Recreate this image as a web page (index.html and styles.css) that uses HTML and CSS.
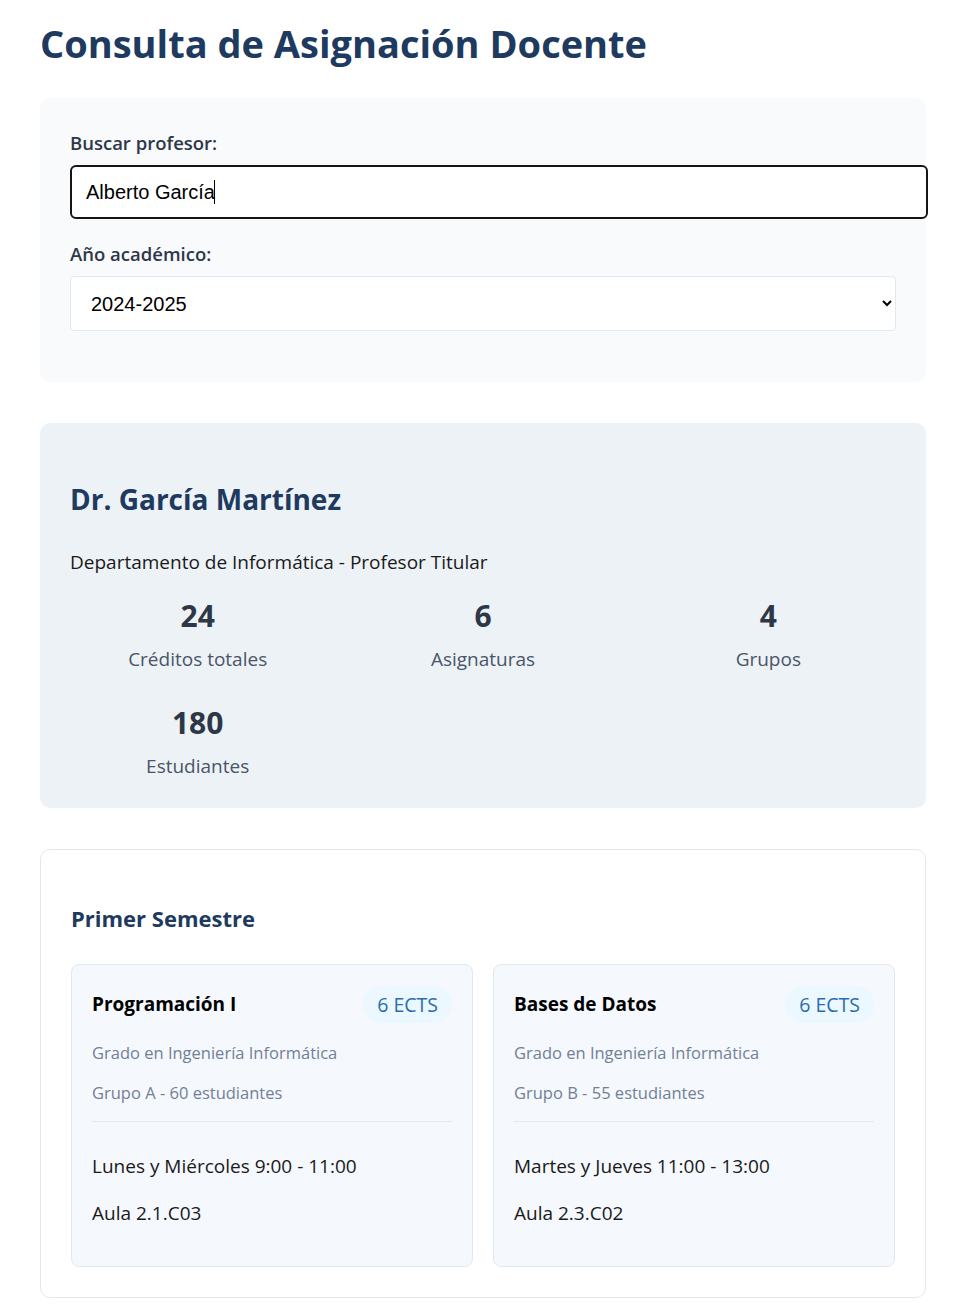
FILE: index.html
```html
<!DOCTYPE html>
<html lang="es">
<head>
<meta charset="utf-8">
<title>Consulta de Asignación Docente</title>
<link rel="stylesheet" href="styles.css">
</head>
<body>
<main class="page">
  <h1 class="title">Consulta de Asignación Docente</h1>

  <section class="search-panel">
    <div class="field">
      <label class="field-label" for="prof">Buscar profesor:</label>
      <div class="input-wrap">
        <input id="prof" class="text-input" type="text" value="Alberto García">
        <span class="caret"></span>
      </div>
    </div>
    <div class="field">
      <label class="field-label" for="year">Año académico:</label>
      <select id="year" class="select-input">
        <option>2024-2025</option>
        <option>2023-2024</option>
      </select>
    </div>
  </section>

  <section class="prof-panel">
    <h2 class="prof-name">Dr. García Martínez</h2>
    <p class="prof-dept">Departamento de Informática - Profesor Titular</p>
    <div class="stats">
      <div class="stat"><div class="stat-num">24</div><div class="stat-label">Créditos totales</div></div>
      <div class="stat"><div class="stat-num">6</div><div class="stat-label">Asignaturas</div></div>
      <div class="stat"><div class="stat-num">4</div><div class="stat-label">Grupos</div></div>
      <div class="stat"><div class="stat-num">180</div><div class="stat-label">Estudiantes</div></div>
    </div>
  </section>

  <section class="semester">
    <h3 class="semester-title">Primer Semestre</h3>
    <div class="courses">
      <article class="course">
        <div class="course-head">
          <h4 class="course-name">Programación I</h4>
          <span class="badge">6 ECTS</span>
        </div>
        <p class="course-meta">Grado en Ingeniería Informática</p>
        <p class="course-meta">Grupo A - 60 estudiantes</p>
        <div class="course-sched">
          <p class="sched-line">Lunes y Miércoles 9:00 - 11:00</p>
          <p class="sched-line">Aula 2.1.C03</p>
        </div>
      </article>
      <article class="course">
        <div class="course-head">
          <h4 class="course-name">Bases de Datos</h4>
          <span class="badge">6 ECTS</span>
        </div>
        <p class="course-meta">Grado en Ingeniería Informática</p>
        <p class="course-meta">Grupo B - 55 estudiantes</p>
        <div class="course-sched">
          <p class="sched-line">Martes y Jueves 11:00 - 13:00</p>
          <p class="sched-line">Aula 2.3.C02</p>
        </div>
      </article>
    </div>
  </section>
</main>
</body>
</html>
```

FILE: styles.css
```css
* { box-sizing: border-box; }

html, body {
  margin: 0;
  padding: 0;
  background: #ffffff;
}

body {
  font-family: "Open Sans", "Noto Sans", sans-serif;
  font-size: 19px;
  color: #1a1a1a;
}

.page {
  padding: 0 40px 20px;
}

.title {
  margin: 0;
  padding-top: 18px;
  font-size: 38px;
  line-height: 50px;
  font-weight: 700;
  color: #1e3a5f;
  margin-bottom: 30px;
}

/* search panel */
.search-panel {
  background: #f8fafc;
  border-radius: 10px;
  padding: 31px 30px 30px;
}

.field { margin-bottom: 21px; }

.field-label {
  display: block;
  font-size: 18.5px;
  line-height: 27px;
  font-weight: 600;
  color: #2d3748;
  margin-bottom: 9px;
}

.input-wrap { position: relative; }

.text-input {
  box-sizing: content-box;
  width: 100%;
  padding: 15px 14px;
  height: 20px;
  border: 2px solid #151515;
  border-radius: 6px;
  font-family: "Liberation Sans", Arial, sans-serif;
  font-size: 20px;
  color: #000;
  background: #fff;
  outline: none;
}

.caret {
  position: absolute;
  left: 144px;
  top: 15px;
  width: 1px;
  height: 24px;
  background: #000;
}

.select-input {
  display: block;
  width: 100%;
  height: 55px;
  padding: 0 12px 0 16px;
  border: 1px solid #e2e8f0;
  border-radius: 4px;
  background: #fff;
  font-family: "Liberation Sans", Arial, sans-serif;
  font-size: 20px;
  color: #000;
}

/* professor panel */
.prof-panel {
  margin-top: 41px;
  background: #edf2f7;
  border-radius: 10px;
  padding: 30px 30px 28px;
}

.prof-name {
  margin: 27px 0 0;
  font-size: 28px;
  line-height: 39px;
  font-weight: 700;
  color: #1e3a5f;
}

.prof-dept {
  margin: 30px 0 0;
  font-size: 19px;
  line-height: 27px;
  color: #1a1a1a;
}

.stats {
  margin-top: 22px;
  display: grid;
  grid-template-columns: repeat(3, 1fr);
  column-gap: 30px;
  row-gap: 32px;
  text-align: center;
}

.stat-num {
  font-size: 30px;
  line-height: 36px;
  font-weight: 700;
  color: #2d3748;
}

.stat-label {
  margin-top: 12px;
  font-size: 19px;
  line-height: 27px;
  color: #4a5568;
}

/* semester */
.semester {
  margin-top: 41px;
  border: 1px solid #e2e8f0;
  border-radius: 10px;
  padding: 30px;
  background: #fff;
}

.semester-title {
  margin: 24px 0 0;
  font-size: 22px;
  line-height: 28px;
  font-weight: 700;
  color: #1e3a5f;
}

.courses {
  margin-top: 32px;
  display: grid;
  grid-template-columns: 1fr 1fr;
  gap: 20px;
}

.course {
  background: #f5f8fc;
  border: 1px solid #e2e8f0;
  border-radius: 8px;
  padding: 21px 20px 38px;
}

.course-head {
  display: flex;
  align-items: center;
  justify-content: space-between;
}

.course-name {
  margin: 0;
  font-size: 19px;
  line-height: 27px;
  font-weight: 700;
  color: #000;
}

.badge {
  background: #ebf8ff;
  color: #2b6cb0;
  font-size: 19.5px;
  line-height: 27px;
  padding: 5px 14px;
  border-radius: 20px;
}

.course-meta {
  margin: 16px 0 0;
  font-size: 16.5px;
  line-height: 27px;
  color: #718096;
}

.course-meta + .course-meta { margin-top: 13px; }

.course-sched {
  margin-top: 15px;
  border-top: 1px solid #e2e8f0;
  padding-top: 29px;
}

.sched-line {
  margin: 0;
  font-size: 19px;
  line-height: 30px;
  color: #1a1a1a;
}

.sched-line + .sched-line { margin-top: 17px; }
```
